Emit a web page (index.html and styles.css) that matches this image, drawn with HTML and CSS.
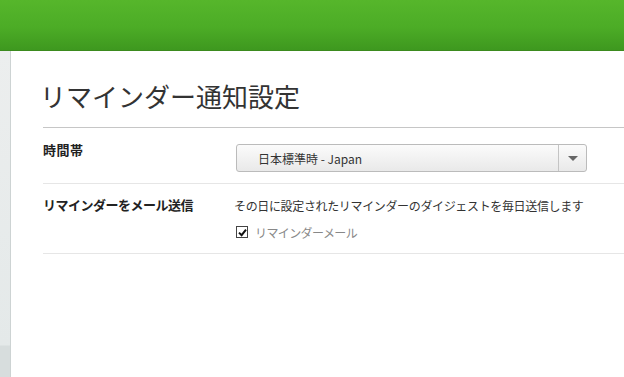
FILE: index.html
```html
<!DOCTYPE html>
<html lang="ja">
<head>
<meta charset="utf-8">
<link rel="stylesheet" href="styles.css">
</head>
<body>
<header class="topbar"></header>
<div class="layout">
  <aside class="sidebar"></aside>
  <main class="main">
    <h1 class="title">リマインダー通知設定</h1>
    <div class="row row-first">
      <div class="label">時間帯</div>
      <div class="field">
        <div class="select">
          <span class="select-text">日本標準時 - Japan</span>
          <span class="select-arrow"><span class="tri"></span></span>
        </div>
      </div>
    </div>
    <div class="row row-second">
      <div class="label label-tight">リマインダーをメール送信</div>
      <div class="field">
        <div class="desc">その日に設定されたリマインダーのダイジェストを毎日送信します</div>
        <label class="check">
          <span class="box"><svg width="9" height="9" viewBox="0 0 9 9"><path d="M1 4.6 L3.6 7.2 L8 1.6" fill="none" stroke="#111" stroke-width="2"/></svg></span>
          <span class="check-text">リマインダーメール</span>
        </label>
      </div>
    </div>
  </main>
</div>
</body>
</html>
```
FILE: styles.css
```css
html, body {
  margin: 0;
  padding: 0;
  background: #fff;
  overflow: hidden;
}
body {
  font-family: "Noto Sans CJK JP", "Liberation Sans", sans-serif;
  color: #333;
  width: 624px;
  height: 377px;
}
.topbar {
  height: 50px;
  background: linear-gradient(#56b62b, #4cac26 55%, #3e981f);
  border-bottom: 1px solid #3b8a1e;
}
.layout {
  display: flex;
  height: 326px;
}
.sidebar {
  width: 10px;
  flex: none;
  background: linear-gradient(#eceeee, #e4e9e9 294px, #d7dddd 295px);
  border-right: 1px solid #cdd3d3;
}
.main {
  flex: 1;
  padding-left: 32px;
  min-width: 0;
}
.title {
  margin: 0;
  padding-top: 27px;
  height: 49px;
  font-size: 26px;
  font-weight: normal;
  line-height: 36px;
  color: #333;
  letter-spacing: 0;
  text-indent: -3px;
  border-bottom: 1px solid #c6c6c6;
}
.row {
  display: grid;
  grid-template-columns: 193px 1fr;
  border-bottom: 1px solid #e6e6e6;
}
.row-first {
  padding: 16px 0 11px;
}
.row-second {
  padding: 12px 0 13px;
}
.label {
  font-size: 13px;
  font-weight: bold;
  color: #222;
  line-height: 20px;
}
.label-tight {
  letter-spacing: -0.5px;
  margin-top: -1px;
}
.row-first .label {
  margin-top: -4px;
  letter-spacing: 0.5px;
}
.select {
  width: 349px;
  height: 26px;
  border: 1px solid #bbb;
  border-radius: 3px;
  background: linear-gradient(#fbfbfb, #e9e9e9);
  display: flex;
  align-items: center;
}
.select-text {
  flex: 1;
  padding-left: 21px;
  font-size: 12px;
  color: #333;
}
.select-arrow {
  width: 27px;
  height: 26px;
  border-left: 1px solid #c4c4c4;
  display: flex;
  align-items: center;
  justify-content: center;
}
.tri {
  width: 0;
  height: 0;
  border-left: 5px solid transparent;
  border-right: 5px solid transparent;
  border-top: 5px solid #666;
}
.desc {
  font-size: 12px;
  color: #333;
  line-height: 20px;
  letter-spacing: -0.35px;
  margin-left: -2px;
  white-space: nowrap;
}
.check {
  display: flex;
  align-items: center;
  gap: 7px;
  margin-top: 8px;
  height: 16px;
}
.box {
  width: 10px;
  height: 10px;
  border: 1px solid #444;
  background: #fff;
  display: flex;
  align-items: center;
  justify-content: center;
}
.check-text {
  font-size: 12px;
  color: #888;
  letter-spacing: -0.6px;
}
```
